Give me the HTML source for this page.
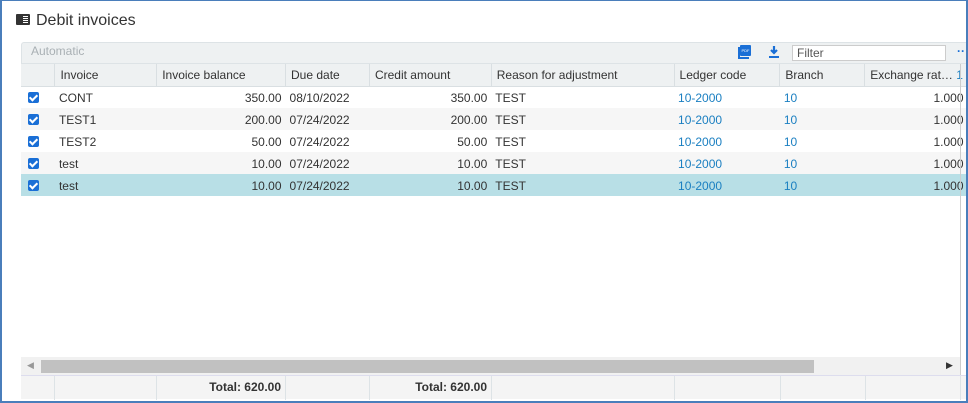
<!DOCTYPE html>
<html><head><style>
*{box-sizing:border-box;margin:0;padding:0}
body{width:968px;height:403px;background:#fff;font-family:"Liberation Sans",sans-serif;font-size:12px;color:#333;position:relative;overflow:hidden}
.frame{position:absolute;left:0;top:0;width:968px;height:403px;border:2px solid #4a7ebb;border-top:1px solid #4a7ebb}
.title{position:absolute;left:16px;top:12px;font-size:16px;color:#333}
.title .ic{display:inline-block;width:14px;height:11px;background:#333;border-radius:1px;vertical-align:0px;margin-right:6px;position:relative}
.title .ic:after{content:"";position:absolute;left:7px;top:2px;width:5px;height:7px;background:repeating-linear-gradient(#fff 0 1px,#333 1px 2px)}
.grid{position:absolute;left:21px;top:42px;width:947px;height:357px;background:#fff}
.tb{position:absolute;left:0;top:0;width:947px;height:22px;background:#eef1f2;border:1px solid #dde3e6;border-radius:3px 0 0 0}
.tb .a{position:absolute;left:9px;top:1px;color:#a9b0b4;font-size:12px}
.filter{position:absolute;left:770px;top:2px;width:154px;height:16px;background:#fff;border:1px solid #ccc;font-size:12px;color:#555;padding-left:4px;line-height:14px}
table{position:absolute;left:0;top:22px;border-collapse:collapse;table-layout:fixed}
td,th{height:22px;white-space:nowrap;overflow:hidden;padding:1px 4px 0;font-weight:normal;text-align:left}
th{background:#eef1f2;border-right:1px solid #d9dfe2;border-bottom:1px solid #d9dfe2;color:#333;padding-left:5px}
tr.alt td{background:#f6f6f6}
tr.sel td{background:#b8dfe6}
.r{text-align:right}
.l{color:#1a7fc1}
.cb{display:inline-block;width:11px;height:11px;background:#1a6fd6;border-radius:2px;position:relative;margin-left:3px;vertical-align:-1px}
.cb:after{content:"";position:absolute;left:3px;top:1px;width:3px;height:6px;border:solid #fff;border-width:0 2px 2px 0;transform:rotate(45deg)}
.sb{position:absolute;left:0;top:315px;width:939px;height:18px;background:#f1f1f1}
.thumb{position:absolute;left:20px;top:3px;width:773px;height:13px;background:#c1c1c1}
.ft{position:absolute;left:0;top:333px;width:947px;height:24px;background:#f4f4f4;border-top:1px solid #dde;}
.ft div{position:absolute;top:0;height:24px;border-right:1px solid #dde3e6;font-weight:bold;text-align:right;line-height:23px;padding-right:4px}
.vl{position:absolute;left:939px;top:22px;width:1px;height:311px;background:#ccc}
</style></head><body>
<div class="title"><span class="ic"></span>Debit invoices</div>
<div class="grid">
<div class="tb"><span class="a">Automatic</span>
<svg style="position:absolute;left:716px;top:2px" width="14" height="14"><rect x="2" y="0" width="11" height="11" fill="#1a6fd6" rx="1"/><rect x="0" y="2" width="2" height="11" fill="#1a6fd6"/><rect x="0" y="12" width="11" height="2" fill="#1a6fd6"/><text x="3.5" y="7" font-size="4" fill="#fff" font-family="Liberation Sans">PDF</text></svg>
<svg style="position:absolute;left:746px;top:2px" width="12" height="14"><path d="M6 1v7M3 5l3 3 3-3" stroke="#1a6fd6" stroke-width="2.2" fill="none"/><rect x="1" y="11" width="10" height="2" fill="#1a6fd6"/></svg>
<div class="filter">Filter</div>
<span style="position:absolute;left:935px;top:1px;color:#1a6fd6;font-weight:bold">··</span>
</div>
<table>
<colgroup><col style="width:34px"><col style="width:102px"><col style="width:129px"><col style="width:84px"><col style="width:122px"><col style="width:183px"><col style="width:106px"><col style="width:85px"><col style="width:95px"></colgroup>
<tr><th></th><th>Invoice</th><th>Invoice balance</th><th>Due date</th><th>Credit amount</th><th>Reason for adjustment</th><th>Ledger code</th><th>Branch</th><th>Exchange rat… <span style="color:#1a7fc1">1</span></th></tr>
<tr><td><span class="cb"></span></td><td>CONT</td><td class="r">350.00</td><td>08/10/2022</td><td class="r">350.00</td><td>TEST</td><td class="l">10-2000</td><td class="l">10</td><td class="r">1.000</td></tr>
<tr class="alt"><td><span class="cb"></span></td><td>TEST1</td><td class="r">200.00</td><td>07/24/2022</td><td class="r">200.00</td><td>TEST</td><td class="l">10-2000</td><td class="l">10</td><td class="r">1.000</td></tr>
<tr><td><span class="cb"></span></td><td>TEST2</td><td class="r">50.00</td><td>07/24/2022</td><td class="r">50.00</td><td>TEST</td><td class="l">10-2000</td><td class="l">10</td><td class="r">1.000</td></tr>
<tr class="alt"><td><span class="cb"></span></td><td>test</td><td class="r">10.00</td><td>07/24/2022</td><td class="r">10.00</td><td>TEST</td><td class="l">10-2000</td><td class="l">10</td><td class="r">1.000</td></tr>
<tr class="sel"><td><span class="cb"></span></td><td>test</td><td class="r">10.00</td><td>07/24/2022</td><td class="r">10.00</td><td>TEST</td><td class="l">10-2000</td><td class="l">10</td><td class="r">1.000</td></tr>
</table>
<div class="vl"></div>
<div class="sb"><span style="position:absolute;left:6px;top:3px;font-size:9px;color:#999">◀</span><div class="thumb"></div><span style="position:absolute;left:925px;top:3px;font-size:9px;color:#333">▶</span></div>
<div class="ft">
<div style="left:0;width:34px"></div><div style="left:34px;width:102px"></div><div style="left:136px;width:129px">Total: 620.00</div><div style="left:265px;width:84px"></div><div style="left:349px;width:122px">Total: 620.00</div><div style="left:471px;width:183px"></div><div style="left:654px;width:106px"></div><div style="left:760px;width:85px"></div><div style="left:845px;width:95px"></div>
</div>
</div>
<div class="frame"></div>
</body></html>
